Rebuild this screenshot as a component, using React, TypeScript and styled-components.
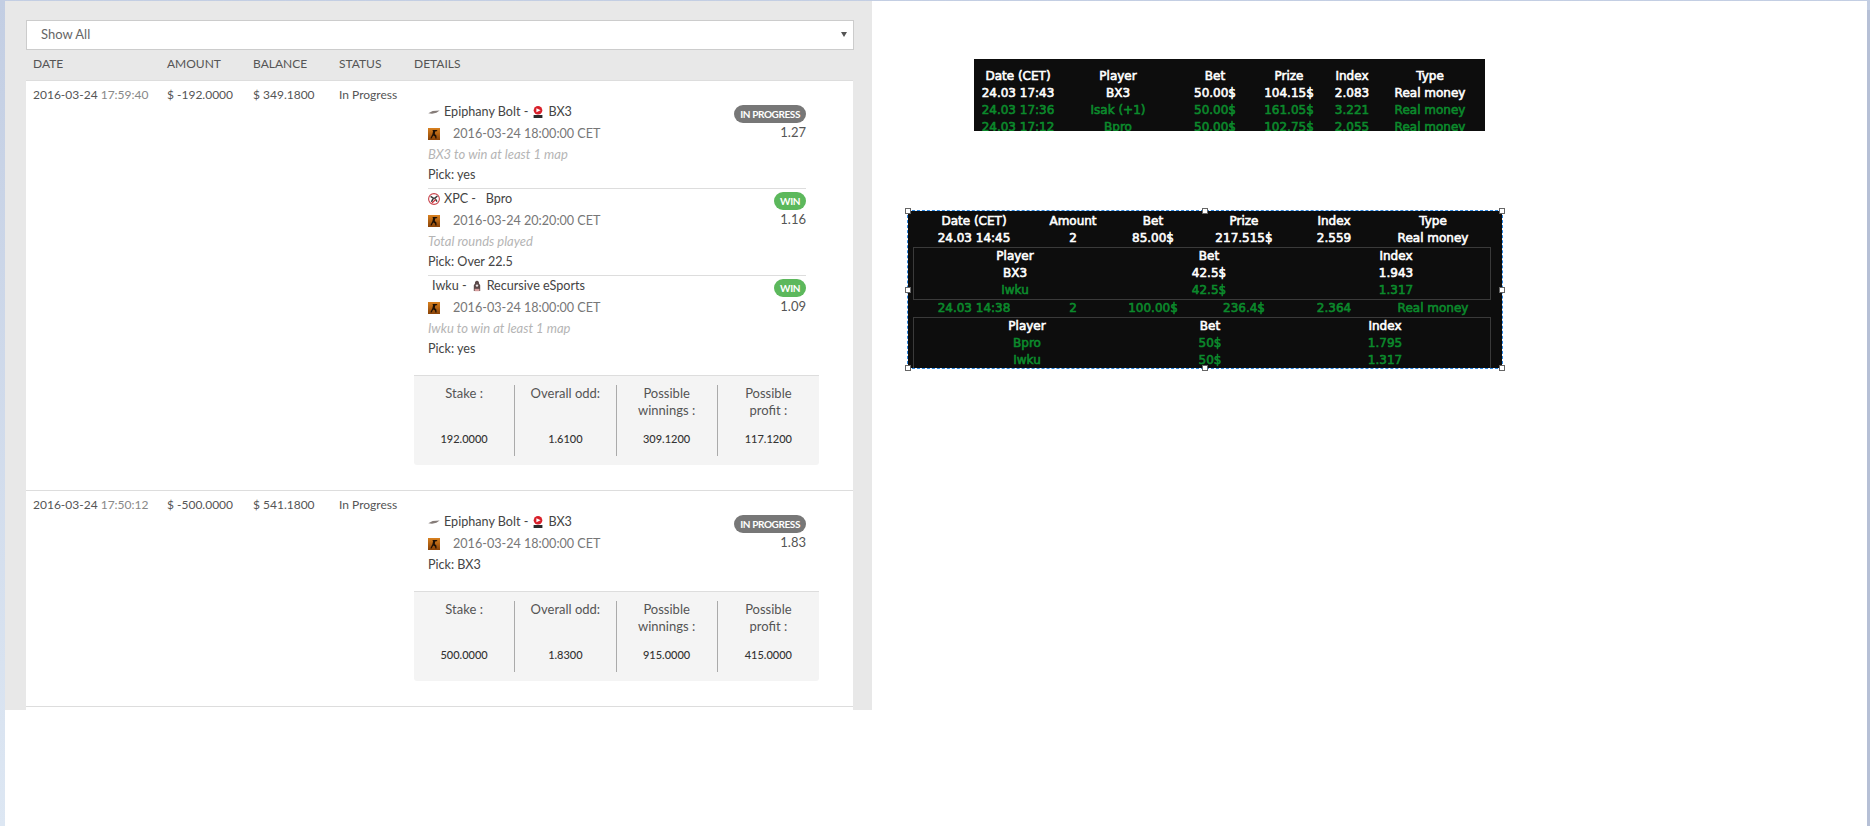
import styled, { createGlobalStyle } from "styled-components";

const GlobalStyle = createGlobalStyle`
  html, body {
    margin: 0;
    padding: 0;
    height: 826px;
    overflow: hidden;
  }
  body {
    background: linear-gradient(180deg, #c3cee3 0%, #dde7f3 100%);
    font-family: Lato, "Open Sans", sans-serif;
  }
`;

type Leg = {
  match: "bolt-bx3" | "xpc-bpro" | "iwku-recursive";
  date: string;
  desc?: string;
  pick: string;
  status: "IN PROGRESS" | "WIN";
  odd: string;
};

type Bet = {
  day: string;
  time: string;
  amount: string;
  balance: string;
  legs: Leg[];
  summary: string[];
};

function CsIcon() {
  return (
    <CsSvg viewBox="0 0 12 12">
      <defs>
        <linearGradient id="cs" x1="0" y1="0" x2="0" y2="1">
          <stop offset="0" stopColor="#d9811f" />
          <stop offset="1" stopColor="#8a4308" />
        </linearGradient>
      </defs>
      <rect width="12" height="12" fill="url(#cs)" />
      <path d="M4.5 2 L8.6 2 L9.6 3 L7.2 3.6 L6.8 6 L8.4 7.6 L8.6 10.6 L7.4 10.6 L7 8.4 L5.2 7.4 L3.6 10.6 L2.4 10.2 L4.4 6.2 L5 3.6 Z" fill="#1c0f04" />
    </CsSvg>
  );
}

function BoltIcon() {
  return (
    <TeamSvg viewBox="0 0 12 12">
      <path d="M0.3 7.2 L4.6 5 L11.7 4.4 L8.4 6.8 L4 7.8 Z" fill="#857c78" />
    </TeamSvg>
  );
}

function Bx3Icon() {
  return (
    <TeamSvg viewBox="0 0 12 12">
      <circle cx="6" cy="4.3" r="4.3" fill="#d8202a" />
      <path d="M4.4 2.2 L8.6 4.2 L4.4 6.2 Z" fill="#fff" />
      <rect x="1.6" y="9" width="8.8" height="3" fill="#2a2a2a" />
    </TeamSvg>
  );
}

function XpcIcon() {
  return (
    <TeamSvg viewBox="0 0 12 12">
      <circle cx="6" cy="6" r="5.4" fill="#fff" stroke="#c9444c" strokeWidth="1.1" />
      <path d="M2.6 3.4 L5.4 5.2 L3.4 8.8 M9.4 3 L6.8 5.2 L9 8.6" fill="none" stroke="#3b3b3b" strokeWidth="1.5" />
      <path d="M4 10 L7.8 6.4" stroke="#d0303a" strokeWidth="1.3" />
    </TeamSvg>
  );
}

function RecursiveIcon() {
  return (
    <TeamSvg viewBox="0 0 12 12">
      <path d="M6 0.8 C7.6 0.8 8.2 2.4 8 3.6 L9.2 5.2 L9.2 11 L2.8 11 L2.8 5.2 L4 3.6 C3.8 2.4 4.4 0.8 6 0.8 Z" fill="#5b4a4a" />
      <rect x="3.6" y="8.8" width="4.8" height="2.4" fill="#d9a0a0" />
      <circle cx="6" cy="5.6" r="1.2" fill="#e9e2e2" />
    </TeamSvg>
  );
}

function MatchTitle({ match }: { match: Leg["match"] }) {
  if (match === "bolt-bx3") {
    return (
      <LegTitle>
        <BoltIcon />
        Epiphany Bolt -
        <TitleGap />
        <Bx3Icon />
        BX3
      </LegTitle>
    );
  }
  if (match === "xpc-bpro") {
    return (
      <LegTitle>
        <XpcIcon />
        XPC -&nbsp;&nbsp;&nbsp;Bpro
      </LegTitle>
    );
  }
  return (
    <LegTitle $indent>
      Iwku -
      <TitleGap />
      <RecursiveIcon />
      Recursive eSports
    </LegTitle>
  );
}

const bets: Bet[] = [
  {
    day: "2016-03-24",
    time: "17:59:40",
    amount: "$ -192.0000",
    balance: "$ 349.1800",
    legs: [
      {
        match: "bolt-bx3",
        date: "2016-03-24 18:00:00 CET",
        desc: "BX3 to win at least 1 map",
        pick: "Pick: yes",
        status: "IN PROGRESS",
        odd: "1.27",
      },
      {
        match: "xpc-bpro",
        date: "2016-03-24 20:20:00 CET",
        desc: "Total rounds played",
        pick: "Pick: Over 22.5",
        status: "WIN",
        odd: "1.16",
      },
      {
        match: "iwku-recursive",
        date: "2016-03-24 18:00:00 CET",
        desc: "Iwku to win at least 1 map",
        pick: "Pick: yes",
        status: "WIN",
        odd: "1.09",
      },
    ],
    summary: ["192.0000", "1.6100", "309.1200", "117.1200"],
  },
  {
    day: "2016-03-24",
    time: "17:50:12",
    amount: "$ -500.0000",
    balance: "$ 541.1800",
    legs: [
      {
        match: "bolt-bx3",
        date: "2016-03-24 18:00:00 CET",
        pick: "Pick: BX3",
        status: "IN PROGRESS",
        odd: "1.83",
      },
    ],
    summary: ["500.0000", "1.8300", "915.0000", "415.0000"],
  },
];

const summaryLabels = ["Stake :", "Overall odd:", "Possible winnings :", "Possible profit :"];

const firstCols = "88px 112px 82px 66px 60px 96px";
const secondCols = "132px 66px 94px 88px 92px 106px";
const nestedColsA = "200px 188px 186px";
const nestedColsB = "224px 142px 208px";

type DarkCells = { cells: string[]; green?: boolean };

function DarkLine({ cols, cells, green }: DarkCells & { cols: string }) {
  return (
    <DarkRow $cols={cols} $green={green}>
      {cells.map((c, i) => (
        <span key={i}>{c}</span>
      ))}
    </DarkRow>
  );
}

const handles = [
  [0, 0],
  [50, 0],
  [100, 0],
  [0, 50],
  [100, 50],
  [0, 100],
  [50, 100],
  [100, 100],
];

export default function App() {
  return (
    <>
      <GlobalStyle />
      <Page>
        <Canvas>
          <Panel>
            <Select>
              <span>Show All</span>
              <Arrow />
            </Select>
            <HeadRow>
              <span>Date</span>
              <span>Amount</span>
              <span>Balance</span>
              <span>Status</span>
              <span>Details</span>
            </HeadRow>
            <Table>
              {bets.map((bet) => (
                <BetRow key={bet.time}>
                  <Cell>
                    {bet.day} <Time>{bet.time}</Time>
                  </Cell>
                  <Cell>{bet.amount}</Cell>
                  <Cell>{bet.balance}</Cell>
                  <Cell>In Progress</Cell>
                  <Details>
                    <Legs>
                      {bet.legs.map((leg, i) => (
                        <LegRow key={i} $last={i === bet.legs.length - 1}>
                          <div>
                            <MatchTitle match={leg.match} />
                            <LegDate>
                              <CsIcon />
                              {leg.date}
                            </LegDate>
                            {leg.desc && <LegDesc>{leg.desc}</LegDesc>}
                            <LegPick>{leg.pick}</LegPick>
                          </div>
                          <LegResult>
                            <Badge $win={leg.status === "WIN"}>{leg.status}</Badge>
                            <Odd>{leg.odd}</Odd>
                          </LegResult>
                        </LegRow>
                      ))}
                    </Legs>
                    <Summary>
                      {summaryLabels.map((label, i) => (
                        <SummaryCell key={label}>
                          <SummaryLabel>{label}</SummaryLabel>
                          <SummaryValue>{bet.summary[i]}</SummaryValue>
                        </SummaryCell>
                      ))}
                    </Summary>
                  </Details>
                </BetRow>
              ))}
            </Table>
          </Panel>

          <Shots>
            <FirstShot>
              <DarkLine cols={firstCols} cells={["Date (CET)", "Player", "Bet", "Prize", "Index", "Type"]} />
              <DarkLine cols={firstCols} cells={["24.03 17:43", "BX3", "50.00$", "104.15$", "2.083", "Real money"]} />
              <DarkLine cols={firstCols} green cells={["24.03 17:36", "Isak (+1)", "50.00$", "161.05$", "3.221", "Real money"]} />
              <DarkLine cols={firstCols} green cells={["24.03 17:12", "Bpro", "50.00$", "102.75$", "2.055", "Real money"]} />
            </FirstShot>

            <SecondShot>
              <DarkLine cols={secondCols} cells={["Date (CET)", "Amount", "Bet", "Prize", "Index", "Type"]} />
              <DarkLine cols={secondCols} cells={["24.03 14:45", "2", "85.00$", "217.515$", "2.559", "Real money"]} />
              <Nested>
                <DarkLine cols={nestedColsA} cells={["Player", "Bet", "Index"]} />
                <DarkLine cols={nestedColsA} cells={["BX3", "42.5$", "1.943"]} />
                <DarkLine cols={nestedColsA} green cells={["Iwku", "42.5$", "1.317"]} />
              </Nested>
              <DarkLine cols={secondCols} green cells={["24.03 14:38", "2", "100.00$", "236.4$", "2.364", "Real money"]} />
              <Nested $open>
                <DarkLine cols={nestedColsB} cells={["Player", "Bet", "Index"]} />
                <DarkLine cols={nestedColsB} green cells={["Bpro", "50$", "1.795"]} />
                <DarkLine cols={nestedColsB} green cells={["Iwku", "50$", "1.317"]} />
              </Nested>
              {handles.map(([x, y]) => (
                <Handle key={`${x}-${y}`} $x={x} $y={y} />
              ))}
            </SecondShot>
          </Shots>
        </Canvas>
        <ScrollEdge />
      </Page>
    </>
  );
}

const Page = styled.div`
  height: 826px;
  box-sizing: border-box;
  padding: 1px 0 0 5px;
  display: flex;
`;

const Canvas = styled.div`
  flex: 1;
  background: #fff;
  display: flex;
  align-items: flex-start;
`;

const ScrollEdge = styled.div`
  width: 3px;
  margin-top: 9px;
  background: #b6c0d6;
`;

const Panel = styled.div`
  width: 867px;
  box-sizing: border-box;
  padding: 19px 18px 0 21px;
  background: #e8e8e8;
`;

const Select = styled.div`
  width: 828px;
  height: 30px;
  box-sizing: border-box;
  border: 1px solid #ccc;
  background: #fff;
  padding: 0 6px 2px 14px;
  display: flex;
  align-items: center;
  justify-content: space-between;
  font-size: 13px;
  color: #666;
`;

const Arrow = styled.i`
  width: 0;
  height: 0;
  border-left: 3px solid transparent;
  border-right: 3px solid transparent;
  border-top: 5px solid #555;
`;

const gridCols = "134px 86px 86px 75px 1fr";

const HeadRow = styled.div`
  height: 30px;
  width: 827px;
  box-sizing: border-box;
  padding: 0 0 4px 7px;
  display: grid;
  grid-template-columns: ${gridCols};
  align-items: center;
  font-size: 12px;
  color: #555;
  text-transform: uppercase;
`;

const Table = styled.div`
  width: 827px;
  background: #fff;
  border-top: 1px solid #ddd;
  padding-bottom: 3px;
`;

const BetRow = styled.div`
  display: grid;
  grid-template-columns: ${gridCols};
  padding-left: 7px;
  border-bottom: 1px solid #ddd;
  font-size: 12px;
  color: #555;
`;

const Cell = styled.div`
  padding-top: 5px;
  line-height: 18px;
  white-space: nowrap;
`;

const Time = styled.span`
  color: #888;
`;

const Details = styled.div`
  width: 405px;
  padding-top: 21px;
  padding-bottom: 25px;
`;

const Legs = styled.div`
  padding: 0 13px 0 14px;
`;

const LegRow = styled.div<{ $last?: boolean }>`
  display: flex;
  justify-content: space-between;
  padding-bottom: 3px;
  border-bottom: 1px solid ${({ $last }) => ($last ? "transparent" : "#ddd")};
`;

const LegTitle = styled.div<{ $indent?: boolean }>`
  display: flex;
  align-items: center;
  height: 21px;
  box-sizing: border-box;
  padding: 0 0 2px ${({ $indent }) => ($indent ? "4px" : "0")};
  font-size: 12.6px;
  color: #444;
  white-space: nowrap;
`;

const TitleGap = styled.span`
  width: 4px;
`;

const TeamSvg = styled.svg`
  width: 12px;
  height: 12px;
  margin-right: 4px;
  flex: none;
`;

const CsSvg = styled.svg`
  width: 12px;
  height: 12px;
  margin-right: 13px;
  flex: none;
`;

const LegDate = styled.div`
  display: flex;
  align-items: center;
  height: 22px;
  box-sizing: border-box;
  padding-bottom: 1px;
  font-size: 12.6px;
  color: #777;
`;

const LegDesc = styled.div`
  height: 20px;
  line-height: 18px;
  font-size: 13px;
  font-style: italic;
  color: #b5b5b5;
`;

const LegPick = styled.div`
  height: 20px;
  line-height: 20px;
  font-size: 12.6px;
  color: #444;
`;

const LegResult = styled.div`
  display: flex;
  flex-direction: column;
  align-items: flex-end;
  padding-top: 3px;
`;

const Badge = styled.span<{ $win?: boolean }>`
  height: 18px;
  line-height: 18px;
  padding: 0 6px;
  border-radius: 9px;
  background: ${({ $win }) => ($win ? "#5cb85c" : "#777")};
  color: #fff;
  font-size: 10px;
  font-weight: 700;
  letter-spacing: -0.4px;
  white-space: nowrap;
`;

const Odd = styled.span`
  line-height: 18px;
  font-size: 13px;
  color: #555;
`;

const Summary = styled.div`
  margin-top: 12px;
  height: 90px;
  box-sizing: border-box;
  padding-top: 9px;
  display: grid;
  grid-template-columns: repeat(4, 1fr);
  align-items: start;
  background: #f4f4f4;
  border-top: 1px solid #ddd;
  border-radius: 0 0 3px 3px;
`;

const SummaryCell = styled.div`
  height: 71px;
  padding: 0 14px;
  box-sizing: border-box;
  text-align: center;
  border-right: 1px solid #aaa;

  &:last-child {
    border-right: none;
  }
`;

const SummaryLabel = styled.div`
  height: 34px;
  line-height: 17px;
  font-size: 13px;
  color: #555;
`;

const SummaryValue = styled.div`
  margin-top: 11px;
  line-height: 17px;
  font-size: 11px;
  font-weight: 500;
  color: #333;
`;

const Shots = styled.div`
  display: flex;
  flex-direction: column;
  align-items: flex-start;
  padding-top: 58px;
`;

const FirstShot = styled.div`
  margin-left: 102px;
  width: 511px;
  height: 72px;
  box-sizing: border-box;
  padding-top: 9px;
  background: #0d0d0d;
  overflow: hidden;
`;

const SecondShot = styled.div`
  position: relative;
  margin-top: 80px;
  margin-left: 36px;
  width: 594px;
  height: 157px;
  box-sizing: border-box;
  padding-top: 2px;
  background: #0d0d0d;
  outline: 1px dashed #2b86e0;
`;

const DarkRow = styled.div<{ $cols: string; $green?: boolean }>`
  display: grid;
  grid-template-columns: ${({ $cols }) => $cols};
  height: 17px;
  line-height: 17px;
  text-align: center;
  white-space: nowrap;
  font-family: "DejaVu Sans", Verdana, sans-serif;
  font-size: 12px;
  -webkit-text-stroke: 0.6px currentColor;
  color: ${({ $green }) => ($green ? "#0b8a2c" : "#fff")};
`;

const Nested = styled.div<{ $open?: boolean }>`
  margin: 0 0 0 5px;
  width: 578px;
  box-sizing: border-box;
  padding: 0 1px;
  border: 1px solid #3a3a3a;
  border-bottom: ${({ $open }) => ($open ? "none" : "1px solid #3a3a3a")};
`;

const Handle = styled.i<{ $x: number; $y: number }>`
  position: absolute;
  left: ${({ $x }) => $x}%;
  top: ${({ $y }) => $y}%;
  width: 4px;
  height: 4px;
  margin: -3px 0 0 -3px;
  background: #fff;
  border: 1px solid #666;
`;
